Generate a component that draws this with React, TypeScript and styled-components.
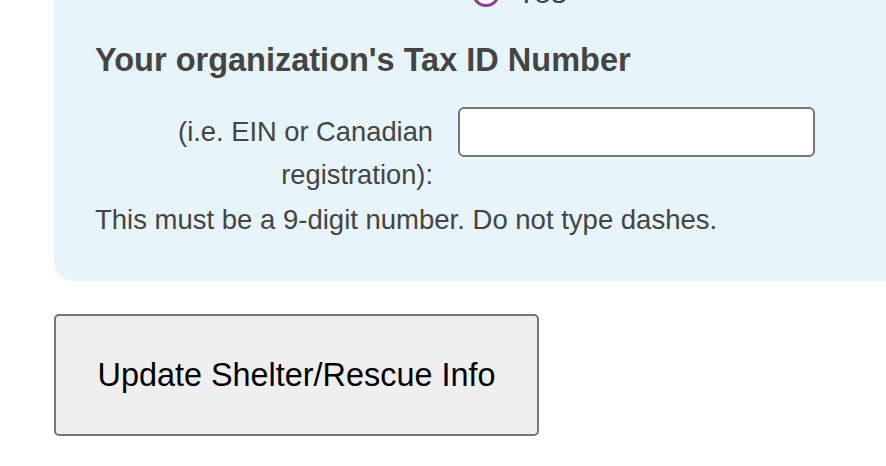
import React from "react";
import styled, { createGlobalStyle } from "styled-components";

const GlobalStyle = createGlobalStyle`
  html, body {
    margin: 0;
    padding: 0;
    background: #ffffff;
    overflow: hidden;
  }
  body {
    font-family: "Liberation Sans", Arial, Helvetica, sans-serif;
  }
`;

const Page = styled.div`
  width: 886px;
  height: 466px;
  padding-left: 54px;
  box-sizing: border-box;
  display: flex;
  flex-direction: column;
  align-items: flex-start;
`;

const Panel = styled.section`
  width: 900px;
  margin-top: -32px;
  box-sizing: border-box;
  padding: 0 0 43px 41px;
  background: #e7f4f9;
  border-radius: 20px;
  display: flex;
  flex-direction: column;
`;

const RadioRow = styled.label`
  height: 50px;
  margin-bottom: 22px;
  padding-left: 377px;
  display: flex;
  align-items: center;
  gap: 16px;
  font-size: 31px;
  color: #444444;
`;

const RadioMark = styled.span`
  width: 28px;
  height: 28px;
  box-sizing: border-box;
  border-radius: 50%;
  border: 3px solid #8e3c96;
  background: #ffffff;
  display: flex;
  align-items: center;
  justify-content: center;
  &::after {
    content: "";
    width: 14px;
    height: 14px;
    border-radius: 50%;
    background: #8e3c96;
  }
`;

const Heading = styled.h2`
  margin: 0 0 27px 0;
  font-size: 32.5px;
  line-height: 40px;
  font-weight: 700;
  color: #444444;
`;

const FieldRow = styled.div`
  display: flex;
  align-items: flex-start;
  gap: 25px;
`;

const FieldLabel = styled.label`
  width: 338px;
  padding-top: 3px;
  text-align: right;
  font-size: 27.3px;
  line-height: 43px;
  color: #444444;
`;

const TextInput = styled.input`
  width: 357px;
  height: 50px;
  box-sizing: border-box;
  border: 2px solid #767676;
  border-radius: 6px;
  background: #ffffff;
  outline: none;
`;

const HelpText = styled.p`
  margin: 6px 0 0 0;
  font-size: 27.5px;
  line-height: 36px;
  color: #444444;
`;

const SubmitButton = styled.button`
  margin-top: 33px;
  width: 485px;
  height: 122px;
  box-sizing: border-box;
  border: 2px solid #767676;
  border-radius: 5px;
  background: #efefef;
  color: #000000;
  font-family: "Liberation Sans", Arial, Helvetica, sans-serif;
  font-size: 32.4px;
  padding: 0;
  cursor: pointer;
`;

export default function App() {
  return (
    <>
      <GlobalStyle />
      <Page>
        <Panel>
          <RadioRow>
            <RadioMark />
            Yes
          </RadioRow>
          <Heading>Your organization's Tax ID Number</Heading>
          <FieldRow>
            <FieldLabel htmlFor="taxid">
              (i.e. EIN or Canadian
              <br />
              registration):
            </FieldLabel>
            <TextInput id="taxid" type="text" />
          </FieldRow>
          <HelpText>This must be a 9-digit number. Do not type dashes.</HelpText>
        </Panel>
        <SubmitButton type="button">Update Shelter/Rescue Info</SubmitButton>
      </Page>
    </>
  );
}
